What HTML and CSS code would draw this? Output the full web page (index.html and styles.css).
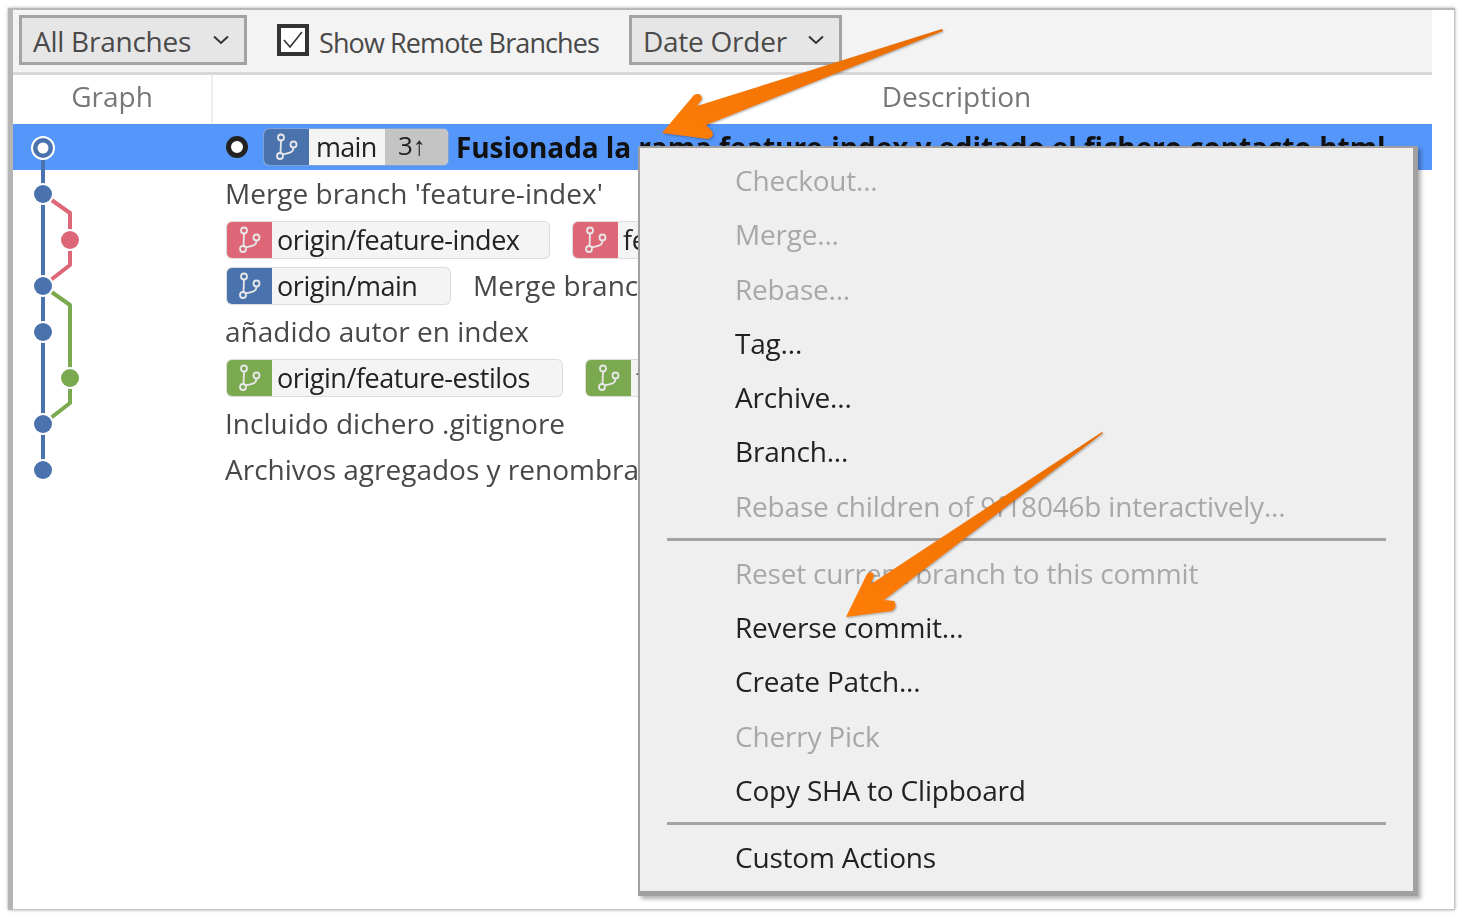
FILE: index.html
```html
<!DOCTYPE html>
<html>
<head>
  <title>Git Graph</title>
  <link rel="stylesheet" href="styles.css">
</head>
<body>
  <svg width="0" height="0" class="defs">
    <symbol id="branch" viewBox="0 0 45 36">
      <circle cx="17" cy="8.5" r="3"/>
      <circle cx="16" cy="27" r="3"/>
      <circle cx="29.5" cy="15.5" r="3"/>
      <path d="M17 11.5L16.5 24M29.5 18.5C29.5 24 25 24 18.5 25.5"/>
    </symbol>
  </svg>

  <div class="window">
    <div class="toolbar">
      <div class="combo combo-branches"><span>All Branches</span><svg class="caret" viewBox="0 0 18 10"><path d="M2 1.5L9 8L16 1.5"/></svg></div>
      <div class="check">
        <svg class="checkbox" viewBox="0 0 32 32"><rect x="2" y="2" width="28" height="28"/><path d="M7 16L13 23L25 8"/></svg>
        <span>Show Remote Branches</span>
      </div>
      <div class="combo combo-order"><span>Date Order</span><svg class="caret" viewBox="0 0 18 10"><path d="M2 1.5L9 8L16 1.5"/></svg></div>
    </div>

    <div class="table-head">
      <div class="head-graph">Graph</div>
      <div class="head-desc">Description</div>
    </div>

    <div class="rows">
      <svg class="graph" width="100" height="368" viewBox="0 0 100 368">
        <path class="line blue" d="M30 23V345"/>
        <path class="line red" d="M30 69L57 88V140L30 161"/>
        <path class="line green" d="M30 161L57 180V278L30 299"/>
        <circle class="gap" cx="30" cy="69" r="11"/>
        <circle class="gap" cx="30" cy="161" r="11"/>
        <circle class="gap" cx="30" cy="207" r="11"/>
        <circle class="gap" cx="30" cy="299" r="11"/>
        <circle class="gap" cx="30" cy="345" r="11"/>
        <circle class="gap" cx="57" cy="115" r="11"/>
        <circle class="gap" cx="57" cy="253" r="11"/>
        <circle class="head-ring" cx="30" cy="23" r="11"/>
        <circle class="head-core" cx="30" cy="23" r="5.5"/>
        <circle class="dot-blue" cx="30" cy="69" r="9"/>
        <circle class="dot-blue" cx="30" cy="161" r="9"/>
        <circle class="dot-blue" cx="30" cy="207" r="9"/>
        <circle class="dot-blue" cx="30" cy="299" r="9"/>
        <circle class="dot-blue" cx="30" cy="345" r="9"/>
        <circle class="dot-red" cx="57" cy="115" r="9"/>
        <circle class="dot-green" cx="57" cy="253" r="9"/>
      </svg>

      <div class="row selected">
        <span class="current"></span>
        <span class="chip chip-main">
          <span class="chip-icon blue-bg"><svg><use href="#branch"/></svg></span>
          <span class="chip-name">main</span>
          <span class="chip-count">3↑</span>
        </span>
        <span class="subject">Fusionada la rama feature-index y editado el fichero contacto.html</span>
      </div>
      <div class="row"><span>Merge branch 'feature-index'</span></div>
      <div class="row">
        <span class="chip chip-fi">
          <span class="chip-icon red-bg"><svg><use href="#branch"/></svg></span>
          <span class="chip-name">origin/feature-index</span>
        </span>
        <span class="chip chip-local">
          <span class="chip-icon red-bg"><svg><use href="#branch"/></svg></span>
          <span class="chip-name">feature-index</span>
        </span>
      </div>
      <div class="row">
        <span class="chip chip-om">
          <span class="chip-icon blue-bg"><svg><use href="#branch"/></svg></span>
          <span class="chip-name">origin/main</span>
        </span>
        <span class="after-chip">Merge branch 'feature-estilos'</span>
      </div>
      <div class="row"><span>añadido autor en index</span></div>
      <div class="row">
        <span class="chip chip-fe">
          <span class="chip-icon green-bg"><svg><use href="#branch"/></svg></span>
          <span class="chip-name">origin/feature-estilos</span>
        </span>
        <span class="chip chip-local">
          <span class="chip-icon green-bg"><svg><use href="#branch"/></svg></span>
          <span class="chip-name">feature-estilos</span>
        </span>
      </div>
      <div class="row"><span>Incluido dichero .gitignore</span></div>
      <div class="row"><span>Archivos agregados y renombrados</span></div>
    </div>

    <div class="menu">
      <div class="item off">Checkout...</div>
      <div class="item off">Merge...</div>
      <div class="item off">Rebase...</div>
      <div class="item">Tag...</div>
      <div class="item">Archive...</div>
      <div class="item">Branch...</div>
      <div class="item off">Rebase children of 9f18046b interactively...</div>
      <div class="sep"></div>
      <div class="item off">Reset current branch to this commit</div>
      <div class="item">Reverse commit...</div>
      <div class="item">Create Patch...</div>
      <div class="item off">Cherry Pick</div>
      <div class="item">Copy SHA to Clipboard</div>
      <div class="sep"></div>
      <div class="item">Custom Actions</div>
    </div>
  </div>

  <!-- callout arrows drawn on top of the screenshot -->
  <svg class="arrows" width="1462" height="918" viewBox="0 0 1462 918">
    <defs>
      <linearGradient id="orange" x1="1" y1="0" x2="0" y2="1">
        <stop offset="0" stop-color="#e86c00"/>
        <stop offset="1" stop-color="#ff7d08"/>
      </linearGradient>
    </defs>
    <path fill="url(#orange)" d="M942 29L697 106L702 99Q701 92 694 95L662 133L708 139Q716 136 711 130L706 125L943 31Z"/>
    <path fill="url(#orange)" d="M1102 432L871 584L874 575Q872 570 867 574L846 617L892 611Q898 607 894 601L884 600L1103 433Z"/>
  </svg>
</body>
</html>
```
FILE: styles.css
```css
/* page */
html, body {
  margin: 0;
  height: 100%;
  background: #fff;
}

body {
  padding: 8px 7px 8px 8px;
  box-sizing: border-box;
  font-family: "Open Sans", "Noto Sans", sans-serif;
  font-size: 28px;
  color: #484848;
  overflow: hidden;
}

.defs {
  position: absolute;
}

/* outer frame */
.window {
  position: relative;
  height: 100%;
  box-sizing: border-box;
  padding-right: 22px;
  background: #fff;
  border-top: 2px solid #b8b8b8;
  border-left: 5px solid #b5b5b5;
  border-right: 1px solid #c4c4c4;
  border-bottom: 1px solid #c4c4c4;
  box-shadow: 0 0 3px rgba(0, 0, 0, 0.35);
  filter: blur(0.45px);
}

/* toolbar */
.toolbar {
  display: flex;
  align-items: center;
  height: 65px;
  box-sizing: border-box;
  padding-left: 6px;
  padding-bottom: 3px;
  background: #f3f3f3;
  border-bottom: 3px solid #d8d8d8;
}

.combo {
  display: flex;
  align-items: center;
  justify-content: space-between;
  height: 50px;
  box-sizing: border-box;
  padding: 0 14px 0 11px;
  background: #e6e6e6;
  border: 3px solid #a3a3a3;
  color: #4a4a4a;
  letter-spacing: -0.25px;
}

.combo span {
  padding-top: 2px;
}

.combo-branches {
  width: 228px;
}

.combo-order {
  width: 213px;
  margin-left: 30px;
}

.caret {
  width: 18px;
  height: 10px;
  fill: none;
  stroke: #333;
  stroke-width: 2;
}

.check {
  display: flex;
  align-items: center;
  gap: 10px;
  margin-left: 30px;
  font-size: 27px;
  letter-spacing: -0.9px;
}

.check span {
  padding-top: 6px;
}

.checkbox {
  width: 32px;
  height: 32px;
}

.checkbox rect {
  fill: #fff;
  stroke: #333;
  stroke-width: 4;
}

.checkbox path {
  fill: none;
  stroke: #333;
  stroke-width: 1.6;
}

/* column heads */
.table-head {
  display: flex;
  height: 49px;
  align-items: stretch;
  line-height: 42px;
  color: #777;
}

.head-graph {
  width: 198px;
  text-align: center;
  border-right: 2px solid #eee;
}

.head-desc {
  flex: 1;
  padding-left: 268px;
  text-align: center;
}

/* commit rows */
.rows {
  position: relative;
}

.graph {
  position: absolute;
  left: 0;
  top: 1px;
  z-index: 1;
}

.line {
  fill: none;
  stroke-width: 4;
  stroke-linejoin: round;
}

.blue { stroke: #4a73ae; }
.red { stroke: #dd6677; }
.green { stroke: #7aa950; }

.gap { fill: #fff; }
.dot-blue { fill: #4a73ae; }
.dot-red { fill: #dd6677; }
.dot-green { fill: #7aa950; }

.head-ring {
  fill: #4a73ae;
  stroke: #fff;
  stroke-width: 2;
}

.head-core {
  fill: #fff;
}

.row {
  display: flex;
  align-items: center;
  height: 46px;
  padding-left: 212px;
  white-space: nowrap;
  overflow: hidden;
}

.selected {
  background: #5596fb;
  padding-left: 213px;
}

.current {
  flex: none;
  width: 22px;
  height: 22px;
  box-sizing: border-box;
  border: 5px solid #222;
  border-radius: 50%;
  background: #fff;
  margin-right: 16px;
}

.subject {
  margin-left: 8px;
  font-weight: 700;
  color: #111;
  letter-spacing: -0.1px;
}

/* branch labels */
.chip {
  flex: none;
  display: flex;
  align-items: stretch;
  height: 36px;
  margin-top: 2px;
  box-sizing: border-box;
  background: #f4f4f4;
  border-radius: 5px;
  box-shadow: 0 0 0 1px #dcdcdc;
  color: #222;
  overflow: hidden;
}

.chip-icon {
  flex: none;
  width: 45px;
}

.chip-icon svg {
  display: block;
  width: 45px;
  height: 36px;
  fill: none;
  stroke: #e8e8e8;
  stroke-width: 1.8;
}

.blue-bg { background: #4a73ae; }
.red-bg { background: #dd6677; }
.green-bg { background: #7aa950; }

.chip-name {
  padding-left: 5px;
  line-height: 36px;
  font-size: 27px;
  letter-spacing: -0.45px;
}

.chip-main {
  margin-top: 0;
  box-shadow: 0 0 0 1px #7ea3db;
}

.chip-main .chip-name {
  width: 69px;
  padding-left: 7px;
  letter-spacing: -0.7px;
}

.chip-count {
  width: 63px;
  padding-left: 13px;
  box-sizing: border-box;
  background: #c4c4c4;
  line-height: 32px;
  font-size: 26px;
}

.chip-fi { width: 322px; margin-left: 2px; }
.chip-om { width: 223px; margin-left: 2px; }
.chip-fe { width: 335px; margin-left: 2px; }

.chip-local {
  width: 200px;
  margin-left: 24px;
}

.after-chip {
  margin-left: 23px;
}

/* context menu */
.menu {
  position: absolute;
  left: 625px;
  top: 136px;
  z-index: 2;
  width: 780px;
  height: 750px;
  box-sizing: border-box;
  padding-top: 5px;
  background: #efefef;
  border: 2px solid #a0a0a0;
  border-right-width: 5px;
  border-bottom-width: 5px;
  box-shadow: 3px 3px 4px rgba(0, 0, 0, 0.3);
  color: #222;
  letter-spacing: -0.2px;
}

.item {
  height: 54.25px;
  line-height: 54px;
  padding-left: 95px;
  white-space: nowrap;
}

.off {
  color: #a8a8a8;
}

.sep {
  height: 3px;
  margin: 5px 27px 5px 27px;
  background: #a3a3a3;
}

/* callouts */
.arrows {
  position: absolute;
  left: 0;
  top: 0;
  z-index: 3;
  filter: drop-shadow(1px 1px 1px rgba(0, 0, 0, 0.3));
}
```
